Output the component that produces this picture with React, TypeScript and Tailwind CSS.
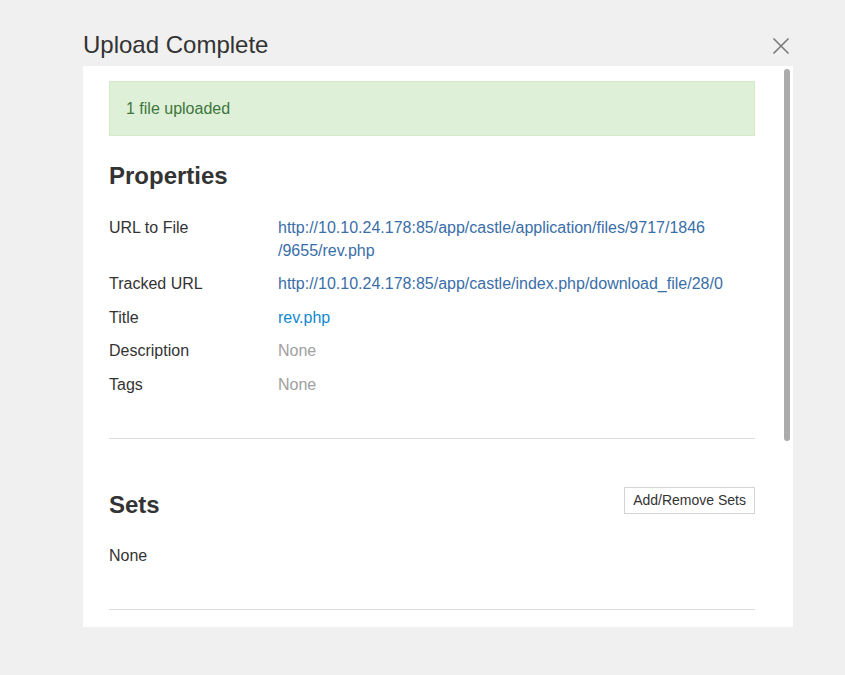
import React from "react";

const font = { fontFamily: '"Liberation Sans", Arial, sans-serif' };

function Row({ label, children }: { label: string; children: React.ReactNode }) {
  return (
    <div className="flex">
      <div className="w-[169px] shrink-0 text-[#333]">{label}</div>
      <div className="flex-1">{children}</div>
    </div>
  );
}

export default function App() {
  return (
    <div className="w-[845px] h-[675px] bg-[#f0f0f0] overflow-hidden text-[16px] leading-[23px]" style={font}>
      <div className="pt-[27px] pl-[83px] w-[793px] flex flex-col">
        <div className="h-[36px] flex items-center justify-between">
          <div className="text-[24px] leading-[28px] text-[#333]">Upload Complete</div>
          <svg width="18" height="18" viewBox="0 0 18 18" className="mr-[3px] mt-[2px]">
            <path d="M1.5 1.5 L16.5 16.5 M16.5 1.5 L1.5 16.5" stroke="#7a7a7a" strokeWidth="1.6" fill="none" />
          </svg>
        </div>
        <div className="relative mt-[3px] h-[561px] bg-white overflow-hidden pl-[26px] pr-[38px] pt-[15px]">
          <div className="absolute right-[3px] top-[3px] w-[6px] h-[372px] rounded-full bg-[#ababab]" />
          <div className="border border-[#d6e9c6] bg-[#dff0d8] text-[#3c763d] px-4 pt-[16px] pb-[15px] leading-[22px]">
            1 file uploaded
          </div>
          <h2 className="mt-[26px] text-[24px] leading-[28px] font-bold text-[#333]">Properties</h2>
          <div className="mt-[25.5px] flex flex-col gap-[10.5px]">
            <Row label="URL to File">
              <span className="text-[#3a6ea8]">
                http://10.10.24.178:85/app/castle/application/files/9717/1846
                <br />
                /9655/rev.php
              </span>
            </Row>
            <Row label="Tracked URL">
              <span className="text-[#3a6ea8]">http://10.10.24.178:85/app/castle/index.php/download_file/28/0</span>
            </Row>
            <Row label="Title">
              <span className="text-[#1288d0]">rev.php</span>
            </Row>
            <Row label="Description">
              <span className="text-[#a0a0a0]">None</span>
            </Row>
            <Row label="Tags">
              <span className="text-[#a0a0a0]">None</span>
            </Row>
          </div>
          <div className="mt-[42.5px] border-t border-[#dddddd]" />
          <div className="mt-[48px] flex items-start justify-between">
            <h2 className="pt-[4px] text-[24px] leading-[28px] font-bold text-[#333]">Sets</h2>
            <button className="h-[27px] border border-[#d4d4d4] bg-white px-[8px] text-[14px] leading-[25px] text-[#333]">
              Add/Remove Sets
            </button>
          </div>
          <div className="mt-[24.5px] text-[#333]">None</div>
          <div className="mt-[42.5px] border-t border-[#dddddd]" />
        </div>
      </div>
    </div>
  );
}
